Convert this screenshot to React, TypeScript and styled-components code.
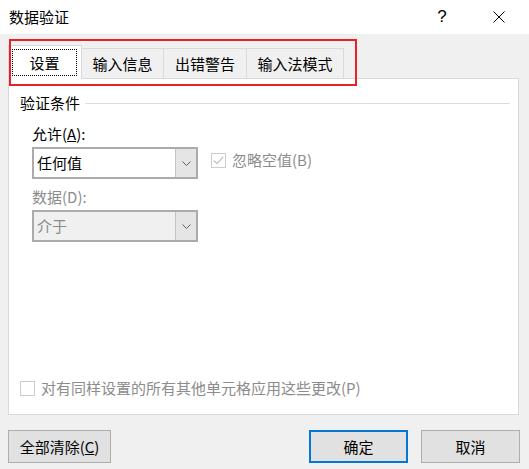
import React from "react";
import styled, { createGlobalStyle } from "styled-components";

const GlobalStyle = createGlobalStyle`
  html, body {
    margin: 0;
    padding: 0;
    background: #f0f0f0;
  }
  body {
    font-family: "Noto Sans CJK SC", "Noto Sans", "Liberation Sans", sans-serif;
    font-size: 15px;
    line-height: 20px;
    color: #000;
  }
  * { box-sizing: border-box; }
`;

const Window = styled.div`
  position: relative;
  width: 529px;
  height: 469px;
  background: #f0f0f0;
  display: flex;
  flex-direction: column;
  overflow: hidden;
`;

const TitleBar = styled.div`
  height: 34px;
  background: #ffffff;
  display: flex;
  align-items: center;
  padding: 0 7px 0 9px;
`;

const Title = styled.div`
  flex: 1;
  font-size: 15px;
  color: #000;
`;

const Controls = styled.div`
  display: flex;
  align-items: center;
  gap: 11px;
  height: 100%;
`;

const CaptionButton = styled.div`
  width: 46px;
  height: 34px;
  display: flex;
  align-items: center;
  justify-content: center;
  font-family: "Liberation Sans", sans-serif;
  font-size: 17px;
  color: #000;
`;

const TabStrip = styled.div`
  margin-top: 11px;
  height: 33px;
  padding-left: 8px;
  display: flex;
  align-items: flex-end;
`;

const Tab = styled.div<{ $active?: boolean; $width: number; $first?: boolean }>`
  width: ${(p) => p.$width}px;
  height: ${(p) => (p.$active ? 34 : 30)}px;
  margin-bottom: ${(p) => (p.$active ? -1 : 0)}px;
  position: relative;
  z-index: ${(p) => (p.$active ? 2 : 1)};
  background: ${(p) => (p.$active ? "#ffffff" : "#f0f0f0")};
  border-top: 1px solid #d9d9d9;
  border-right: 1px solid #d9d9d9;
  border-left: ${(p) => (p.$first ? "1px solid #d9d9d9" : "none")};
  display: flex;
  align-items: center;
  justify-content: center;
  padding: ${(p) => (p.$active ? "3px 4px 3px 3px" : "0")};
  font-size: 15px;
`;

const FocusRect = styled.div`
  flex: 1;
  align-self: stretch;
  border: 1px dotted #000;
  display: flex;
  align-items: center;
  justify-content: center;
`;

const Panel = styled.div`
  margin-left: 8px;
  width: 511px;
  height: 337px;
  background: #ffffff;
  border: 1px solid #d9d9d9;
  display: flex;
  flex-direction: column;
  padding: 14px 8px 16px 11px;
`;

const GroupHeader = styled.div`
  display: flex;
  align-items: center;
  height: 20px;
`;

const GroupLine = styled.div`
  flex: 1;
  height: 1px;
  background: #dcdcdc;
  margin-left: 5px;
`;

const GroupBody = styled.div`
  padding-left: 12px;
  display: flex;
  flex-direction: column;
`;

const Label = styled.div<{ $disabled?: boolean; $top: number }>`
  margin-top: ${(p) => p.$top}px;
  height: 20px;
  color: ${(p) => (p.$disabled ? "#8c8c8c" : "#000")};
`;

const Row = styled.div`
  display: flex;
  align-items: flex-start;
  margin-top: 3px;
`;

const Combo = styled.div<{ $disabled?: boolean }>`
  width: 166px;
  height: 32px;
  border: 2px solid #ababab;
  background: ${(p) => (p.$disabled ? "#f0f0f0" : "#ffffff")};
  color: ${(p) => (p.$disabled ? "#8c8c8c" : "#000")};
  display: flex;
  align-items: stretch;
`;

const ComboText = styled.div`
  flex: 1;
  display: flex;
  align-items: center;
  padding-left: 3px;
  font-size: 15px;
`;

const ComboButton = styled.div`
  width: 21px;
  background: #e5e5e5;
  border-left: 1px solid #c4c4c4;
  display: flex;
  align-items: center;
  justify-content: center;
`;

const CheckRow = styled.div<{ $indent: number; $top: number }>`
  display: flex;
  align-items: center;
  height: 20px;
  margin-left: ${(p) => p.$indent}px;
  margin-top: ${(p) => p.$top}px;
  color: #8c8c8c;
  gap: 6px;
`;

const CheckBox = styled.div`
  width: 15px;
  height: 15px;
  border: 1px solid #cccccc;
  background: #ffffff;
  display: flex;
  align-items: center;
  justify-content: center;
`;

const BottomCheck = styled(CheckRow)`
  margin-top: auto;
`;

const Footer = styled.div`
  margin-top: 15px;
  display: flex;
  padding: 0 9px 0 8px;
`;

const Button = styled.div<{ $width: number; $default?: boolean }>`
  width: ${(p) => p.$width}px;
  height: 33px;
  background: #e1e1e1;
  border: ${(p) => (p.$default ? "2px solid #0078d7" : "1px solid #adadad")};
  display: flex;
  align-items: center;
  justify-content: center;
  font-size: 15px;
  color: #000;
`;

const Spacer = styled.div`
  flex: 1;
`;

const ButtonGap = styled.div`
  width: 13px;
`;

const Highlight = styled.div`
  position: absolute;
  left: 9px;
  top: 39px;
  width: 348px;
  height: 47px;
  border: 2px solid #e8202a;
  pointer-events: none;
  z-index: 5;
`;

const Chevron = () => (
  <svg width="9" height="5" viewBox="0 0 9 5">
    <path d="M0.5 0.5 L4.5 4.5 L8.5 0.5" fill="none" stroke="#606060" strokeWidth="1" />
  </svg>
);

const Check = () => (
  <svg width="11" height="9" viewBox="0 0 11 9">
    <path d="M0.8 4.5 L4 7.6 L10.2 1" fill="none" stroke="#c4c4c4" strokeWidth="1.3" />
  </svg>
);

const CloseIcon = () => (
  <svg width="12" height="12" viewBox="0 0 12 12">
    <path d="M0.5 0.5 L11.5 11.5 M11.5 0.5 L0.5 11.5" stroke="#000" strokeWidth="1" fill="none" />
  </svg>
);

export default function App() {
  return (
    <>
      <GlobalStyle />
      <Window>
        <TitleBar>
          <Title>数据验证</Title>
          <Controls>
            <CaptionButton>?</CaptionButton>
            <CaptionButton>
              <CloseIcon />
            </CaptionButton>
          </Controls>
        </TitleBar>

        <TabStrip>
          <Tab $active $first $width={74}>
            <FocusRect>设置</FocusRect>
          </Tab>
          <Tab $width={82}>输入信息</Tab>
          <Tab $width={83}>出错警告</Tab>
          <Tab $width={97}>输入法模式</Tab>
        </TabStrip>

        <Panel>
          <GroupHeader>
            验证条件
            <GroupLine />
          </GroupHeader>
          <GroupBody>
            <Label $top={11}>
              允许(<u>A</u>):
            </Label>
            <Row>
              <Combo>
                <ComboText>任何值</ComboText>
                <ComboButton>
                  <Chevron />
                </ComboButton>
              </Combo>
              <CheckRow $indent={13} $top={3}>
                <CheckBox>
                  <Check />
                </CheckBox>
                忽略空值(B)
              </CheckRow>
            </Row>
            <Label $disabled $top={8}>
              数据(D):
            </Label>
            <Row>
              <Combo $disabled>
                <ComboText>介于</ComboText>
                <ComboButton>
                  <Chevron />
                </ComboButton>
              </Combo>
            </Row>
          </GroupBody>
          <BottomCheck $indent={0} $top={0}>
            <CheckBox />
            对有同样设置的所有其他单元格应用这些更改(P)
          </BottomCheck>
        </Panel>

        <Footer>
          <Button $width={103}>
            全部清除(<u>C</u>)
          </Button>
          <Spacer />
          <Button $width={99} $default>
            确定
          </Button>
          <ButtonGap />
          <Button $width={99}>取消</Button>
        </Footer>

        <Highlight />
      </Window>
    </>
  );
}
